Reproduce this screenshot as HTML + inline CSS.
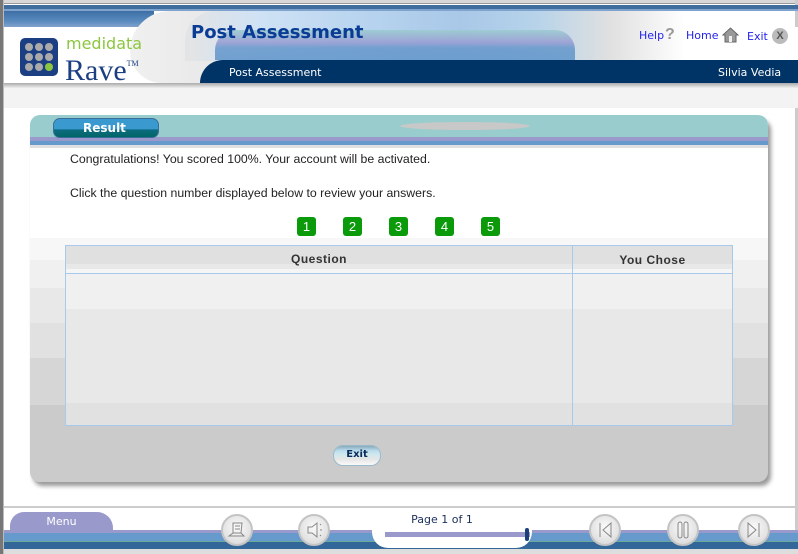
<!DOCTYPE html>
<html><head><style>
*{margin:0;padding:0;box-sizing:border-box}
body{width:798px;height:554px;overflow:hidden;background:#fff;position:relative;font-family:"Liberation Sans",sans-serif}
.a{position:absolute}
.v{font-family:"DejaVu Sans","Liberation Sans",sans-serif}
.num{position:absolute;top:217px;width:19px;height:19px;background:#0a9a0a;border-radius:3px;color:#fff;font-size:13px;text-align:center;line-height:19px}
.btn{position:absolute;top:514px;width:32px;height:32px;border-radius:50%;background:radial-gradient(circle at 50% 40%,#fafafa,#e4e4e4 60%,#cfcfcf);border:2px solid #c4c4c4}
</style></head><body>
<div class="a" style="left:0;top:0;width:798px;height:4px;background:#d8d8d8;border-bottom:1px solid #999"></div>
<div class="a" style="left:0;top:0;width:4px;height:554px;background:#777;border-right:1px solid #bbb"></div>
<div class="a" style="right:0;top:0;width:3px;height:554px;background:#ccc"></div>
<!-- header -->
<div class="a" style="left:4px;top:5px;width:794px;height:4px;background:#3f6d9e"></div>
<div class="a" style="left:4px;top:9px;width:794px;height:2px;background:#7fa3cc"></div>
<div class="a" style="left:4px;top:11px;width:150px;height:17px;background:linear-gradient(#3d6fa5,#5a8bbf 60%,#8aa6cf)"></div>
<div class="a" style="left:4px;top:27px;width:794px;height:56px;background:#fff"></div>
<div class="a" style="left:130px;top:11px;width:110px;height:72px;background:linear-gradient(90deg,#f0f0f0,#e6e6e6);border-radius:50px 0 0 40px"></div>
<div class="a" style="left:185px;top:11px;width:500px;height:50px;background:linear-gradient(90deg,#e4e4e4 0,#cfe2f5 15%,#b8d4ef 35%,#a9c8e8 55%,#b6d3ea 70%,#e0e0e0 85%,rgba(255,255,255,0) 100%);border-radius:30px 0 0 0"></div>
<div class="a" style="left:215px;top:30px;width:360px;height:30px;background:linear-gradient(#9ccbd0,#9b9fd4 40%,#6a9acc 60%,#6699cc);border-radius:20px 20px 0 0;opacity:.9"></div>
<div class="a" style="left:200px;top:60px;width:598px;height:23px;background:#003366;border-radius:30px 0 0 0"></div>
<div class="a" style="left:4px;top:83px;width:794px;height:5px;background:linear-gradient(#aaa,#eee)"></div>
<div class="a" style="left:4px;top:88px;width:794px;height:20px;background:#f3f3f3"></div>
<div class="a" style="left:20px;top:38px;width:38px;height:38px;background:#1c3f83;border-radius:5px"></div>
<svg class="a" style="left:20px;top:38px" width="38" height="38">
<g fill="#aaa"><circle cx="9" cy="9" r="4"/><circle cx="19" cy="9" r="4"/><circle cx="29" cy="9" r="4"/><circle cx="9" cy="19" r="4"/><circle cx="19" cy="19" r="4"/><circle cx="29" cy="19" r="4"/><circle cx="9" cy="29" r="4"/><circle cx="19" cy="29" r="4"/></g><circle cx="29" cy="29" r="4" fill="#8cc63f"/></svg>
<div class="a v" style="left:66px;top:34px;font-size:16px;color:#8cc63f">medidata</div>
<div class="a" style="left:65px;top:48px;font-family:'Liberation Serif',serif;font-size:30px;color:#1c3f83;line-height:32px">Rave<sup style="font-size:8px;vertical-align:14px">TM</sup></div>
<div class="a v" style="left:191px;top:22px;font-size:18px;font-weight:bold;color:#0a3c96">Post Assessment</div>
<div class="a v" style="left:229px;top:66px;font-size:11px;color:#fff">Post Assessment</div>
<div class="a v" style="left:718px;top:66px;font-size:11px;color:#fff">Silvia Vedia</div>
<div class="a v" style="left:639px;top:29px;font-size:11px;color:#2222ee">Help</div>
<div class="a" style="left:665px;top:26px;font-size:16px;font-weight:bold;color:#999">?</div>
<div class="a v" style="left:686px;top:29px;font-size:11px;color:#2222ee">Home</div>
<svg class="a" style="left:722px;top:27px" width="17" height="16"><path d="M1 8L8.5 1 16 8H14V15H3V8Z" fill="#999" stroke="#666"/><rect x="7" y="9" width="3" height="6" fill="#eee"/></svg>
<div class="a v" style="left:747px;top:30px;font-size:11px;color:#2222ee">Exit</div>
<div class="a" style="left:772px;top:28px;width:16px;height:16px;border-radius:50%;background:#bbb;color:#555;font-size:11px;font-weight:bold;text-align:center;line-height:16px">X</div>
<!-- panel -->
<div class="a" style="left:33px;top:120px;width:738px;height:366px;border-radius:10px;background:#999;filter:blur(2px)"></div>
<div class="a" style="left:30px;top:115px;width:738px;height:367px;border-radius:10px;overflow:hidden;background:linear-gradient(#fff 0,#fff 123px,#f7f7f7 123px,#f7f7f7 145px,#f0f0f0 145px,#f0f0f0 173px,#e8e8e8 173px,#e8e8e8 208px,#e1e1e1 208px,#e1e1e1 243px,#d6d6d6 243px,#d6d6d6 290px,#cbcbcb 290px)">
<div class="a" style="left:0;top:0;width:738px;height:24px;background:#99cccc"></div>
<div class="a" style="left:370px;top:7px;width:130px;height:8px;border-radius:50%;background:#c8c8c8"></div>
<div class="a" style="left:0;top:22px;width:738px;height:4px;background:#9999cc"></div>
<div class="a" style="left:0;top:26px;width:738px;height:4px;background:#6699cc"></div>
<div class="a" style="left:0;top:30px;width:738px;height:3px;background:#e0e0e0"></div>
</div>
<div class="a" style="left:53px;top:118px;width:106px;height:20px;border-radius:7px;border:1px solid #3a6d9a;background:linear-gradient(#3a9ad0 0,#3a9ad0 55%,#0e6c80 60%,#066 100%)"></div>
<div class="a v" style="left:83px;top:121px;font-size:12px;font-weight:bold;color:#fff">Result</div>
<div class="a" style="left:70px;top:152px;font-size:12.3px;color:#222">Congratulations! You scored 100%. Your account will be activated.</div>
<div class="a" style="left:70px;top:186px;font-size:12.3px;color:#222">Click the question number displayed below to review your answers.</div>
<div class="num" style="left:297px">1</div><div class="num" style="left:343px">2</div><div class="num" style="left:389px">3</div><div class="num" style="left:435px">4</div><div class="num" style="left:481px">5</div>
<div class="a" style="left:65px;top:245px;width:668px;height:181px;border:1px solid #a8c8ec;background:linear-gradient(#e0e0e0 0,#e0e0e0 18px,#e8e8e8 18px,#e8e8e8 23px,#f5f5f5 23px,#f5f5f5 27px,#a8c8ec 27px,#a8c8ec 28px,#f0f0f0 28px,#f0f0f0 63px,#e8e8e8 63px,#e8e8e8 157px,#e1e1e1 157px)"></div>
<div class="a" style="left:572px;top:245px;width:1px;height:181px;background:#a8c8ec"></div>
<div class="a" style="left:66px;top:252px;width:506px;text-align:center;font-size:12px;font-weight:bold;color:#333;letter-spacing:.5px">Question</div>
<div class="a" style="left:573px;top:253px;width:159px;text-align:center;font-size:12px;font-weight:bold;color:#333;letter-spacing:.5px">You Chose</div>
<div class="a" style="left:333px;top:445px;width:48px;height:21px;border-radius:10px;border:1px solid #9bc;background:linear-gradient(#8ab 0,#bde 25%,#cfe8ee 45%,#e6e6e6 70%,#fafafa)"></div>
<div class="a v" style="left:333px;top:449px;width:48px;text-align:center;font-size:10px;font-weight:bold;color:#0a2a5a">Exit</div>
<!-- footer -->
<div class="a" style="left:4px;top:506px;width:794px;height:2px;background:#ccc"></div>
<div class="a" style="left:10px;top:512px;width:103px;height:20px;background:#9999cc;border-radius:14px 16px 0 0"></div>
<div class="a v" style="left:10px;top:515px;width:103px;text-align:center;font-size:11px;color:#fff">Menu</div>
<div class="a" style="left:4px;top:530px;width:794px;height:3px;background:#9999cc"></div>
<div class="a" style="left:4px;top:533px;width:794px;height:9px;background:#6699cc"></div>
<div class="a" style="left:4px;top:541px;width:794px;height:1px;background:#6a9"></div>
<div class="a" style="left:4px;top:542px;width:794px;height:7px;background:#336699"></div>
<div class="a" style="left:4px;top:549px;width:794px;height:5px;background:#ddd"></div>
<div class="a" style="left:372px;top:528px;width:160px;height:20px;background:#fff;border-radius:0 0 16px 16px"></div>
<div class="a v" style="left:372px;top:513px;width:140px;text-align:center;font-size:11px;color:#1a2f5a">Page 1 of 1</div>
<div class="a" style="left:385px;top:532px;width:145px;height:5px;background:#9999cc"></div>
<div class="a" style="left:525px;top:528px;width:4px;height:13px;background:#1a3f7a;border-radius:2px"></div>
<div class="btn" style="left:221px"></div><div class="btn" style="left:298px"></div><div class="btn" style="left:589px"></div><div class="btn" style="left:667px"></div><div class="btn" style="left:738px"></div>
<svg class="a" style="left:221px;top:514px" width="32" height="32" fill="none" stroke="#888" stroke-width="1"><path d="M12 9h9l-1 10h-8zM14 12h5M14 15h5M8 22l4-3h8l3 3z"/></svg>
<svg class="a" style="left:298px;top:514px" width="32" height="32" fill="none" stroke="#888"><path d="M10 13h4l5-4v14l-5-4h-4z"/><path d="M22 11l1-1M22 16h2M22 21l1 1"/></svg>
<svg class="a" style="left:589px;top:514px" width="32" height="32" fill="none" stroke="#888"><path d="M11 9v14M22 9l-8 7 8 7z"/></svg>
<svg class="a" style="left:667px;top:514px" width="32" height="32" fill="none" stroke="#888"><rect x="11" y="8" width="4" height="16" rx="2"/><rect x="17" y="8" width="4" height="16" rx="2"/></svg>
<svg class="a" style="left:738px;top:514px" width="32" height="32" fill="none" stroke="#888"><path d="M10 9l8 7-8 7zM21 9v14"/></svg>
</body></html>
